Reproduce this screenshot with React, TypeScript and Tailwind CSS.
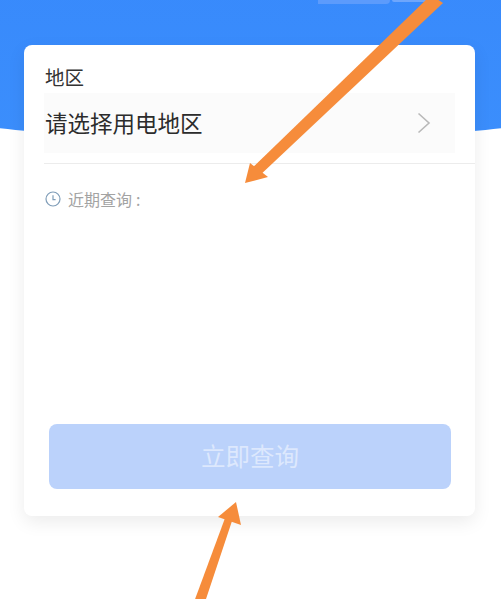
const cjk = "font-['Noto_Sans_CJK_SC','Liberation_Sans',sans-serif]";

function Arrows() {
  return (
    <svg className="absolute inset-0 pointer-events-none" width="501" height="599" viewBox="0 0 501 599">
      <g fill="#f68c3b">
        <polygon points="431,-5 443,3 257,178 250,170" />
        <polygon points="245,183 250,163 268,177" />
        <polygon points="228,510 235,512 205,602 194,602" />
        <polygon points="236,502 218,517 241,525" />
      </g>
    </svg>
  );
}

export default function App() {
  return (
    <div className={`relative w-[501px] h-[599px] overflow-hidden bg-white ${cjk}`}>
      {/* blue header, curved at the bottom */}
      <div className="absolute left-[-120px] top-[-200px] w-[741px] h-[340px] rounded-[50%_50%_50%_50%/0_0_13%_13%] bg-gradient-to-b from-[#3585fb] to-[#3b8efc]" />
      <div className="absolute left-[318px] top-0 w-[72px] h-[4px] rounded-br-md bg-[#5c9bfc] blur-[0.5px]" />
      <div className="absolute left-[392px] top-0 w-[44px] h-[2px] rounded-bl-md bg-[#6ea6fc] blur-[0.5px]" />

      <div className="relative pt-[45px] pl-[24px]">
        <div className="w-[451px] h-[471px] rounded-lg bg-white shadow-[0_6px_18px_rgba(0,0,0,0.08)] flex flex-col">
          <div className="pl-[21px] pt-[18px] pb-[3px] text-[19.5px] leading-[27px] text-[#333]">地区</div>
          <div className="mx-[20px] h-[60px] bg-[#fbfbfb] flex items-center justify-between pl-px pr-[24px]">
            <span className="text-[22.5px] text-[#2c2c2c]">请选择用电地区</span>
            <svg width="14" height="22" viewBox="0 0 14 22" fill="none" stroke="#b9b9b9" strokeWidth="1.6">
              <path d="M1.5 1.5 L12 11 L1.5 20.5" />
            </svg>
          </div>
          <div className="ml-[20px] mt-[10px] h-px bg-[#ececec]" />
          <div className="ml-[21px] mt-[25px] flex items-center gap-[7px] text-[16px] leading-[20px] text-[#a3a3a3]">
            <svg width="16" height="16" viewBox="0 0 16 16" fill="none" stroke="#7f9db8" strokeWidth="1.2">
              <circle cx="8" cy="8" r="7" />
              <path d="M8 4.2 V8.6 H10.6" />
            </svg>
            <span>
              近期查询<span className="ml-[4px]">:</span>
            </span>
          </div>
          <div className="flex-1" />
          <button className="ml-[25px] mr-[24px] mb-[27px] h-[65px] rounded-lg bg-[#bbd2fb] text-[24.5px] text-white/50 flex items-center justify-center">
            立即查询
          </button>
        </div>
      </div>
      <Arrows />
    </div>
  );
}
